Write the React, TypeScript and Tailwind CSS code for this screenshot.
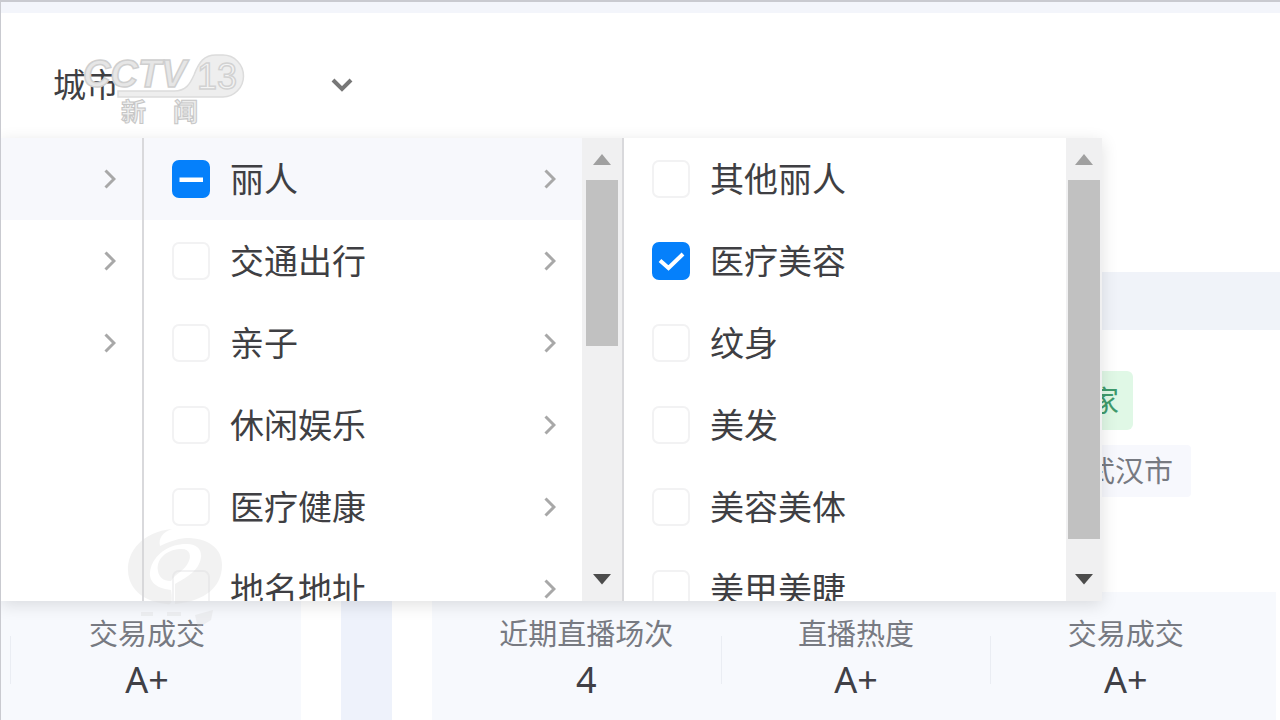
import { useEffect, useRef, type ReactNode } from "react";

type Option = { label: string; checked?: boolean; partial?: boolean };

const categories: Option[] = [
  { label: "丽人", partial: true },
  { label: "交通出行" },
  { label: "亲子" },
  { label: "休闲娱乐" },
  { label: "医疗健康" },
  { label: "地名地址" },
];

const subcategories: Option[] = [
  { label: "其他丽人" },
  { label: "医疗美容", checked: true },
  { label: "纹身" },
  { label: "美发" },
  { label: "美容美体" },
  { label: "美甲美睫" },
];

function Chevron() {
  return (
    <svg className="h-5 w-3 shrink-0" viewBox="0 0 12 20" fill="none" stroke="#a8a8a8" strokeWidth="3" aria-hidden="true">
      <path d="M1.5 1.5 10 10 1.5 18.5" />
    </svg>
  );
}

function CheckBox({ option }: { option: Option }) {
  const ref = useRef<HTMLInputElement>(null);
  useEffect(() => {
    if (ref.current) ref.current.indeterminate = Boolean(option.partial);
  }, [option.partial]);
  return (
    <span className="grid h-[38px] w-[38px] shrink-0 place-items-center">
      <input
        ref={ref}
        type="checkbox"
        defaultChecked={option.checked}
        className="peer col-start-1 row-start-1 h-[38px] w-[38px] appearance-none rounded-[7px] border-2 border-[#f2f2f3] bg-white checked:border-[#0580fb] checked:bg-[#0580fb] indeterminate:border-[#0580fb] indeterminate:bg-[#0580fb]"
      />
      <svg className="pointer-events-none col-start-1 row-start-1 hidden h-[38px] w-[38px] peer-checked:block" viewBox="0 0 38 38" fill="none" stroke="#fff" strokeWidth="4" aria-hidden="true">
        <path d="m8 18.500 8.500 7.500 14.500-14" />
      </svg>
      <svg className="pointer-events-none col-start-1 row-start-1 hidden h-[38px] w-[38px] peer-indeterminate:block" viewBox="0 0 38 38" aria-hidden="true">
        <path d="M7.500 17.500h23.500v4.500H7.500z" fill="#fff" />
      </svg>
    </span>
  );
}

function OptionList({ options, arrows }: { options: Option[]; arrows?: boolean }) {
  return (
    <ul className="h-full min-w-0 flex-1 overflow-hidden">
      {options.map((o) => (
        <li key={o.label} className={o.partial ? "bg-[#f7f8fc]" : ""}>
          <label className="flex h-[82px] items-center gap-5 pr-[26px] pl-7">
            <CheckBox option={o} />
            <span className="flex-1 text-[34px] leading-10 whitespace-nowrap text-[#3f3f43]">{o.label}</span>
            {arrows && <Chevron />}
          </label>
        </li>
      ))}
    </ul>
  );
}

function ScrollBar({ thumb }: { thumb: ReactNode }) {
  return (
    <div className="flex h-full w-full flex-col items-center bg-[#f0f0f1]">
      <button type="button" aria-label="向上滚动" className="flex h-[42px] w-8 shrink-0 items-center justify-center">
        <svg className="h-3 w-[18px]" viewBox="0 0 18 12" fill="#a0a0a0" aria-hidden="true"><path d="M0 12 9 1l9 11z" /></svg>
      </button>
      <div className="w-8 flex-1">{thumb}</div>
      <button type="button" aria-label="向下滚动" className="flex h-[44px] w-8 shrink-0 items-center justify-center">
        <svg className="h-3 w-[18px]" viewBox="0 0 18 12" fill="#4c4c4c" aria-hidden="true"><path d="M0 1h18L9 11.500z" /></svg>
      </button>
    </div>
  );
}

function Stat({ label, value }: { label: string; value: string }) {
  return (
    <div className="flex flex-1 flex-col items-center gap-1.5">
      <dt className="text-[29px] leading-9 whitespace-nowrap text-[#777a82]">{label}</dt>
      <dd className="text-4xl leading-[44px] text-[#404046]">{value}</dd>
    </div>
  );
}

function Divider() {
  return <div className="mt-5 h-12 w-px shrink-0 bg-[#eaedf3]" />;
}

export default function App() {
  return (
    <main className="relative flex h-screen flex-col overflow-hidden border-t-2 border-l border-[#c9cad0] bg-white font-['Noto_Sans','Noto_Sans_CJK_SC',sans-serif]">
      <div className="h-[11px] shrink-0 bg-[#f3f5fb]" />
      <header className="h-[259px] shrink-0 px-[52px] pt-[52px]">
        <button type="button" className="flex w-[300px] items-center justify-between text-[33px] leading-10 text-[#3f3f43]">
          城市
          <svg className="h-[14px] w-[22px]" viewBox="0 0 22 14" fill="none" stroke="#777" strokeWidth="4" aria-hidden="true">
            <path d="m2 2 9 9 9-9" />
          </svg>
        </button>
      </header>
      <div className="h-[58px] shrink-0 bg-[#f0f3f9]" />

      <section className="flex flex-1 bg-[#eef2fb]">
        <article className="flex w-[340px] shrink-0 flex-col bg-white pt-[262px]">
          <dl className="mr-10 flex flex-1 bg-[#f7f9fd] pt-6 pr-[18px] pl-[9px]">
            <Divider />
            <Stat label="交易成交" value="A+" />
          </dl>
        </article>
        <article className="ml-[51px] flex min-w-0 flex-1 flex-col bg-white">
          <div className="flex h-[262px] shrink-0 flex-col items-start gap-[15px] pt-[41px] pl-[676px]">
            <span className="rounded-md bg-[#e0f8e6] py-[10px] pr-[14px] pl-[22px] text-[29px] leading-[39px] text-[#3f9a6c]">家</span>
            <span className="rounded-sm bg-[#f7f8fd] px-[18px] py-2 text-[29px] leading-9 whitespace-nowrap text-[#777a82]">武汉市</span>
          </div>
          <dl className="mr-1 ml-10 flex flex-1 bg-[#f7f9fd] pt-6 pr-4 pl-5">
            <Stat label="近期直播场次" value="4" />
            <Divider />
            <Stat label="直播热度" value="A+" />
            <Divider />
            <Stat label="交易成交" value="A+" />
          </dl>
        </article>
      </section>

      <div className="absolute top-[136px] left-0 flex h-[463px] bg-white shadow-[0_4px_16px_rgba(0,0,0,0.12)]">
        <ul className="w-[143px] border-r-2 border-[#d9d9dc]">
          {[0, 1, 2].map((row) => (
            <li key={row} className={row === 0 ? "bg-[#f7f8fc]" : ""}>
              <button type="button" aria-label="展开" className="flex h-[82px] w-full items-center justify-end pr-[26px]">
                <Chevron />
              </button>
            </li>
          ))}
        </ul>
        <div className="flex w-[480px] border-r-2 border-[#d9d9dc]">
          <OptionList options={categories} arrows />
          <div className="w-[40px]">
            <ScrollBar thumb={<div className="h-[166px] bg-[#c1c1c1]" />} />
          </div>
        </div>
        <div className="flex w-[478px]">
          <OptionList options={subcategories} />
          <div className="w-9">
            <ScrollBar thumb={<div className="h-[359px] bg-[#c1c1c1]" />} />
          </div>
        </div>
      </div>

      <svg className="pointer-events-none absolute top-[48px] left-[79px] h-[80px] w-[170px]" viewBox="80 50 170 80" aria-hidden="true">
        <path d="M118 91H174C186 91 190 84 194 75C199 62 204 55 216 55H223A20.500 21 0 0 1 223 97H118Z" fill="#eeeeee" stroke="#dcdcdc" strokeWidth="1.500" />
        <text x="83" y="87" fontFamily="Liberation Sans, sans-serif" fontStyle="italic" fontWeight="700" fontSize="38" fill="#e6e6e6" stroke="#cfcfcf" strokeWidth="1.500">CCTV</text>
        <text x="197" y="89" fontFamily="Liberation Sans, sans-serif" fontSize="36" fill="#f4f4f4" stroke="#d2d2d2" strokeWidth="1.500">13</text>
        <g fontFamily="Noto Sans CJK SC, sans-serif" fontWeight="700" fontSize="25" fill="#ededed" stroke="#c6c6c6" strokeWidth="1">
          <text x="121" y="121">新</text>
          <text x="173" y="121">闻</text>
        </g>
      </svg>

      <svg className="pointer-events-none absolute top-[526px] left-[124px] h-[110px] w-[100px]" viewBox="125 528 100 110" aria-hidden="true">
        <g fill="#d8d8d8" opacity=".32">
          <path d="M172 529C143 532 127 551 128 571C129 590 145 602 167 604C171 605 173 603 171 590C154 588 147 580 151 567C156 552 172 543 188 544C202 545 204 556 198 566C194 573 184 579 175 584V604C205 601 222 587 222 565C222 548 208 538 186 538C176 539 168 542 160 546C158 538 163 532 172 529Z" />
          <path d="M158 571C156 559 166 550 180 549C190 548 192 556 188 563C184 571 175 574 171 581C163 581 159 577 158 571Z" />
          <path d="M141 612h12v4h-12zm26 0h14v4h-14zm28 3 18-5-2 10-13 8z" />
        </g>
      </svg>
    </main>
  );
}
